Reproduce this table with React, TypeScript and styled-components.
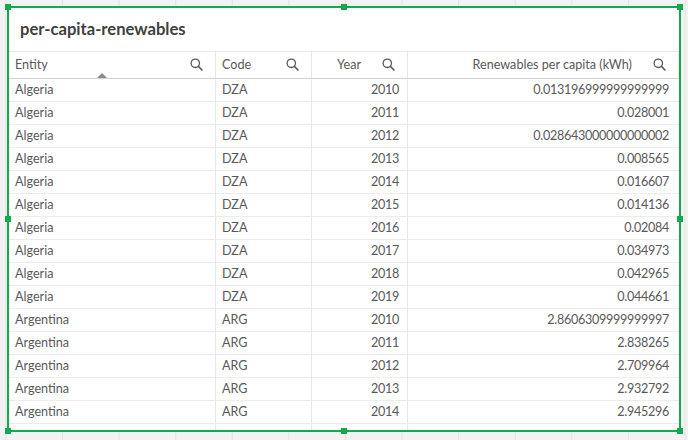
import React from "react";
import styled, { createGlobalStyle } from "styled-components";

const GlobalStyle = createGlobalStyle`
  html, body {
    margin: 0;
    padding: 0;
    background-color: #f2f2f2;
  }
  body {
    background-image: linear-gradient(to right, #e2e2e2 1px, transparent 1px);
    background-size: 56.6px 100%;
    background-position: 5.4px 0;
    font-family: Lato, "Noto Sans", sans-serif;
  }
  * { box-sizing: border-box; }
`;

const Page = styled.div`
  width: 688px;
  height: 440px;
  padding: 6px 7px 0 7px;
`;

const Panel = styled.div`
  position: relative;
  width: 674px;
  height: 426px;
  border: 2px solid #14a94f;
  background: #ffffff;
  display: flex;
  flex-direction: column;
`;

const Handle = styled.span<{ $x: string; $y: string }>`
  position: absolute;
  width: 6px;
  height: 6px;
  background: #14a94f;
  left: ${(p) => p.$x};
  top: ${(p) => p.$y};
  transform: translate(-50%, -50%);
`;

const TitleBar = styled.div`
  height: 43px;
  flex: none;
  display: flex;
  align-items: center;
  padding: 0 11px 2px;
  font-size: 16.6px;
  font-weight: 700;
  color: #404040;
`;

const Table = styled.div`
  flex: 1;
  overflow: hidden;
  display: grid;
  grid-template-columns: 207px 96px 96px 1fr;
  grid-auto-rows: 23px;
  grid-template-rows: 27px;
  border-top: 1px solid #e8e8e8;
  align-content: start;
`;

const HeadCell = styled.div<{ $numeric?: boolean }>`
  position: relative;
  display: flex;
  align-items: center;
  justify-content: ${(p) => (p.$numeric ? "flex-end" : "space-between")};
  gap: 21px;
  padding: 0 12px 1px 6px;
  border-bottom: 1px solid #d2d2d2;
  border-right: 1px solid #e8e8e8;
  font-size: 12.6px;
  color: #595959;
  &:last-child { border-right: none; padding-right: 11px; }
`;

const SortArrow = styled.span`
  position: absolute;
  left: 88px;
  bottom: 0;
  width: 0;
  height: 0;
  border-left: 5px solid transparent;
  border-right: 5px solid transparent;
  border-bottom: 5px solid #8a8a8a;
`;

const Cell = styled.div<{ $numeric?: boolean }>`
  display: flex;
  align-items: center;
  justify-content: ${(p) => (p.$numeric ? "flex-end" : "flex-start")};
  padding: 0 8px 1px 6px;
  border-bottom: 1px solid #ececec;
  border-right: 1px solid #e8e8e8;
  font-size: 12.6px;
  letter-spacing: ${(p) => (p.$numeric ? "-0.3px" : "0")};
  color: #595959;
  white-space: nowrap;
  &:nth-child(4n) { border-right: none; padding-right: 10px; }
`;

const SearchIcon = () => (
  <svg width="13" height="13" viewBox="0 0 13 13" fill="none" style={{ flex: "none" }}>
    <circle cx="5.3" cy="5.3" r="4.2" stroke="#595959" strokeWidth="1.3" />
    <line x1="8.4" y1="8.4" x2="12" y2="12" stroke="#595959" strokeWidth="1.6" strokeLinecap="round" />
  </svg>
);

type Row = [string, string, number, string];

const rows: Row[] = [
  ["Algeria", "DZA", 2010, "0.013196999999999999"],
  ["Algeria", "DZA", 2011, "0.028001"],
  ["Algeria", "DZA", 2012, "0.028643000000000002"],
  ["Algeria", "DZA", 2013, "0.008565"],
  ["Algeria", "DZA", 2014, "0.016607"],
  ["Algeria", "DZA", 2015, "0.014136"],
  ["Algeria", "DZA", 2016, "0.02084"],
  ["Algeria", "DZA", 2017, "0.034973"],
  ["Algeria", "DZA", 2018, "0.042965"],
  ["Algeria", "DZA", 2019, "0.044661"],
  ["Argentina", "ARG", 2010, "2.8606309999999997"],
  ["Argentina", "ARG", 2011, "2.838265"],
  ["Argentina", "ARG", 2012, "2.709964"],
  ["Argentina", "ARG", 2013, "2.932792"],
  ["Argentina", "ARG", 2014, "2.945296"],
  ["", "", 0, ""],
];

const handles: [string, string][] = [
  ["-1px", "-1px"], ["50%", "-1px"], ["calc(100% + 1px)", "-1px"],
  ["-1px", "50%"], ["calc(100% + 1px)", "50%"],
  ["-1px", "calc(100% + 1px)"], ["50%", "calc(100% + 1px)"], ["calc(100% + 1px)", "calc(100% + 1px)"],
];

export default function App() {
  return (
    <>
      <GlobalStyle />
      <Page>
        <Panel>
          <TitleBar>per-capita-renewables</TitleBar>
          <Table>
            <HeadCell>
              <span>Entity</span>
              <SearchIcon />
              <SortArrow />
            </HeadCell>
            <HeadCell>
              <span>Code</span>
              <SearchIcon />
            </HeadCell>
            <HeadCell $numeric>
              <span>Year</span>
              <SearchIcon />
            </HeadCell>
            <HeadCell $numeric>
              <span>Renewables per capita (kWh)</span>
              <SearchIcon />
            </HeadCell>
            {rows.map((r, i) => (
              <React.Fragment key={i}>
                <Cell>{r[0]}</Cell>
                <Cell>{r[1]}</Cell>
                <Cell $numeric>{r[2] || ""}</Cell>
                <Cell $numeric>{r[3]}</Cell>
              </React.Fragment>
            ))}
          </Table>
          {handles.map(([x, y], i) => (
            <Handle key={i} $x={x} $y={y} />
          ))}
        </Panel>
      </Page>
    </>
  );
}
